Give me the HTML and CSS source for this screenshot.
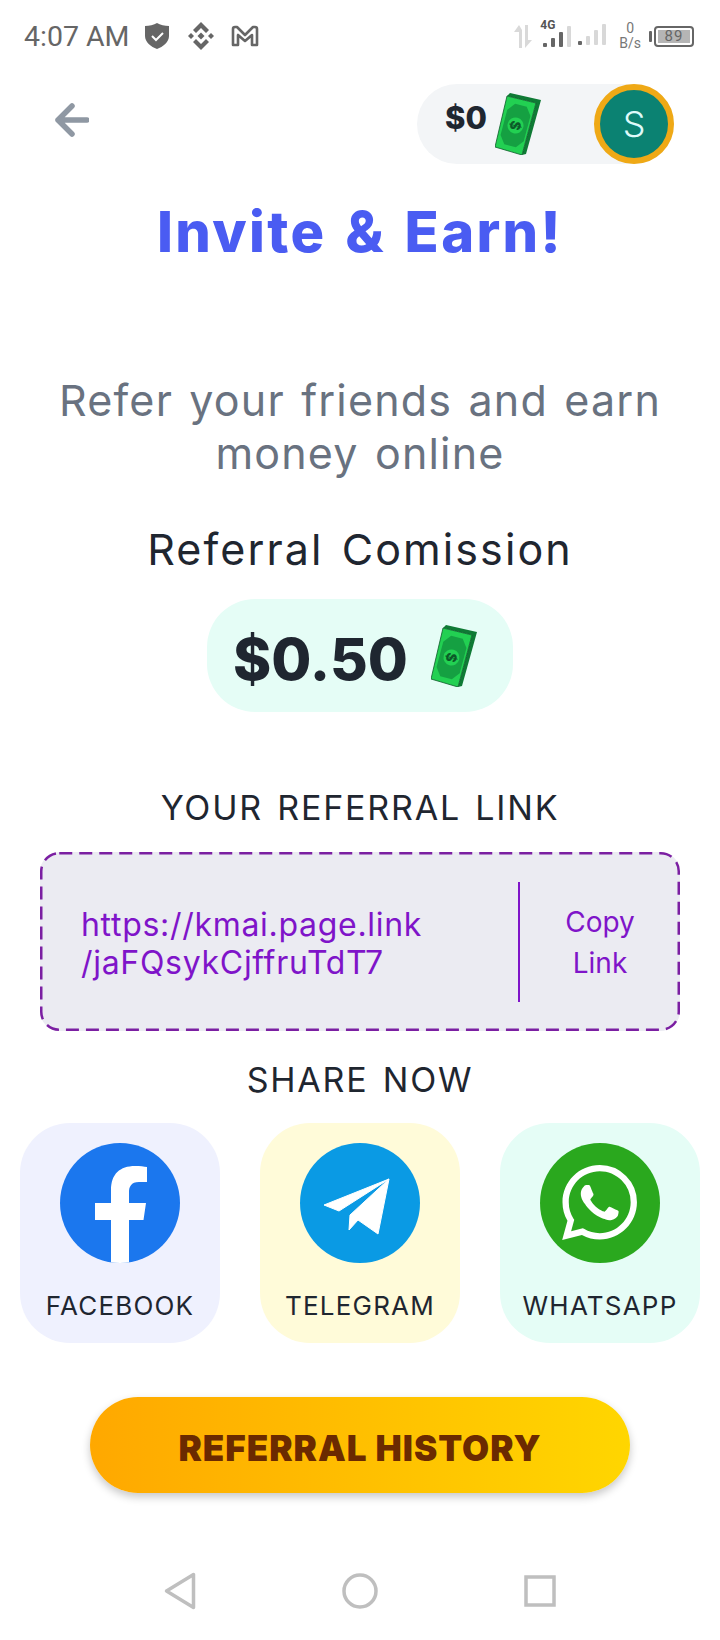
FILE: index.html
```html
<!DOCTYPE html>
<html lang="en">
<head>
    <meta charset="UTF-8">
    <meta name="viewport" content="width=device-width, initial-scale=1.0">
    <title>Invite &amp; Earn</title>
    <link rel="stylesheet" href="styles.css">
</head>
<body>
    <div class="status-bar">
        <div class="status-left">
            <span class="status-time">4:07 AM</span>
            <svg class="ic-shield" width="24" height="26" viewBox="0 0 24 26">
                <path d="M12 0 C15 2 20 3 24 3 V13 C24 19 18 24 12 26 C6 24 0 19 0 13 V3 C4 3 9 2 12 0Z" fill="#666"/>
                <path d="M7 13 L11 17 L18 10" fill="none" stroke="#fff" stroke-width="2"/>
            </svg>
            <svg class="ic-binance" width="28" height="28" viewBox="0 0 28 28" fill="#666">
                <path d="M14 0 L22 8 L19 11 L14 6 L9 11 L6 8Z"/>
                <path d="M14 28 L22 20 L19 17 L14 22 L9 17 L6 20Z"/>
                <path d="M4 11 L7 14 L4 17 L1 14Z"/>
                <path d="M24 11 L27 14 L24 17 L21 14Z"/>
                <path d="M14 10.500 L17.500 14 L14 17.500 L10.500 14Z"/>
            </svg>
            <svg class="ic-mail" width="28" height="22" viewBox="0 0 28 22">
                <path d="M2 20 V4 Q2 2 4 2 H6 L14 10 L22 2 H24 Q26 2 26 4 V20 H21 V10 L14 16 L7 10 V20Z" fill="none" stroke="#666" stroke-width="2.600" stroke-linejoin="round"/>
            </svg>
        </div>
        <div class="status-right">
            <svg class="ic-arrows" width="19" height="23" viewBox="0 0 19 23" fill="#d9d9d9">
                <path d="M6 0 V23 H9 V5Z M1 7 L6 0 V7Z"/>
                <path d="M12 0 V23 L19 15 H15 V0Z"/>
            </svg>
            <div class="signal">
                <span class="signal-label">4G</span>
                <div class="bars">
                    <i class="bar dark h1"></i><i class="bar dark h2"></i><i class="bar dark h3"></i><i class="bar h4"></i>
                </div>
            </div>
            <div class="bars bars-second">
                <i class="bar dark h1"></i><i class="bar h2"></i><i class="bar h3"></i><i class="bar h4"></i>
            </div>
            <div class="speed"><span>0</span><span>B/s</span></div>
            <div class="battery">
                <div class="battery-level">89</div>
            </div>
        </div>
    </div>

    <div class="header">
        <svg class="back" width="34" height="34" viewBox="0 0 34 34">
            <path d="M17 3 L3 17 L17 31 M3 17 H32" fill="none" stroke="#8f98a3" stroke-width="5.500" stroke-linecap="round" stroke-linejoin="round"/>
        </svg>
        <div class="wallet">
            <span class="wallet-amount">$0</span>
            <svg class="cash-small" width="46" height="62" viewBox="0 0 46 62">
                <polygon points="15,0 46,7 31,61 27,62 41,10 12,3" fill="#0f7a35"/>
                <polygon points="12,3 41,10 27,62 0,54" fill="#22d052" stroke="#0c5a2a" stroke-width=".8"/>
                <g transform="translate(20.500 32.500) rotate(15)">
                    <polygon points="-6,-21 6,-21 12,-13 12,13 6,21 -6,21 -12,13 -12,-13" fill="#15a042"/>
                    <circle r="8" fill="#22d052"/>
                    <text class="cash-sign" transform="rotate(90)" y="5">$</text>
                </g>
            </svg>
            <div class="avatar">S</div>
        </div>
    </div>

    <h1 class="title">Invite &amp; Earn!</h1>
    <p class="subtitle">Refer your friends and earn<br>money online</p>
    <h2 class="commission">Referral Comission</h2>

    <div class="amount-pill">
        <span class="amount">$0.50</span>
        <svg width="46" height="62" viewBox="0 0 46 62">
            <polygon points="15,0 46,7 31,61 27,62 41,10 12,3" fill="#0f7a35"/>
            <polygon points="12,3 41,10 27,62 0,54" fill="#22d052" stroke="#0c5a2a" stroke-width=".8"/>
            <g transform="translate(20.500 32.500) rotate(15)">
                <polygon points="-6,-21 6,-21 12,-13 12,13 6,21 -6,21 -12,13 -12,-13" fill="#15a042"/>
                <circle r="8" fill="#22d052"/>
                <text class="cash-sign" transform="rotate(90)" y="5">$</text>
            </g>
        </svg>
    </div>

    <h3 class="section-head head-link">YOUR REFERRAL LINK</h3>
    <div class="link-box">
        <svg class="link-border" width="640" height="179" viewBox="0 0 640 179">
            <rect x="1.250" y="1.250" width="637.500" height="176.500" rx="18" fill="none" stroke="#7b1fa2" stroke-width="2.500" stroke-dasharray="13 7"/>
        </svg>
        <div class="link-url">https://kmai.page.link<br>/jaFQsykCjffruTdT7</div>
        <div class="link-copy">Copy<br>Link</div>
    </div>

    <h3 class="section-head head-share">SHARE NOW</h3>
    <div class="share-row">
        <div class="share-card card-fb">
            <svg width="120" height="120" viewBox="0 0 120 120">
                <clipPath id="fb-clip"><circle cx="60" cy="60" r="60"/></clipPath>
                <circle cx="60" cy="60" r="60" fill="#1b77ee"/>
                <path clip-path="url(#fb-clip)" d="M51 120 V77 H35 V60 H51 V47 C51 31 60 23 75 23 C80 23 84 23.500 87 24 V39 H79 C71 39 69 44 69 49 V60 H86 L83.500 77 H69 V120Z" fill="#fff"/>
            </svg>
            <span class="share-name">FACEBOOK</span>
        </div>
        <div class="share-card card-tg">
            <svg width="120" height="120" viewBox="0 0 120 120">
                <circle cx="60" cy="60" r="60" fill="#0a9ae4"/>
                <path d="M24 62 L89 36 L39 68Z M89 36 L50 72 L49 87 L58 77 L78 91Z" fill="#fff" stroke="#fff" stroke-width="1" stroke-linejoin="round"/>
            </svg>
            <span class="share-name">TELEGRAM</span>
        </div>
        <div class="share-card card-wa">
            <svg width="120" height="120" viewBox="0 0 120 120">
                <circle cx="60" cy="60" r="60" fill="#2aa81e"/>
                <path transform="translate(22 22) scale(3.130)" fill="#fff" d="M17.472 14.382c-.297-.149-1.758-.867-2.03-.967-.273-.099-.471-.148-.67.15-.197.297-.767.966-.94 1.164-.173.199-.347.223-.644.075-.297-.15-1.255-.463-2.39-1.475-.883-.788-1.48-1.761-1.653-2.059-.173-.297-.018-.458.13-.606.134-.133.298-.347.446-.52.149-.174.198-.298.298-.497.099-.198.05-.371-.025-.52-.075-.149-.669-1.612-.916-2.207-.242-.579-.487-.5-.669-.51-.173-.008-.371-.01-.57-.01-.198 0-.52.074-.792.372-.272.297-1.04 1.016-1.04 2.479 0 1.462 1.065 2.875 1.213 3.074.149.198 2.096 3.2 5.077 4.487.709.306 1.262.489 1.694.625.712.227 1.36.195 1.871.118.571-.085 1.758-.719 2.006-1.413.248-.694.248-1.289.173-1.413-.074-.124-.272-.198-.57-.347m-5.421 7.403h-.004a9.87 9.87 0 01-5.031-1.378l-.361-.214-3.741.982.998-3.648-.235-.374a9.86 9.86 0 01-1.51-5.26c.001-5.45 4.436-9.884 9.888-9.884 2.64 0 5.122 1.03 6.988 2.898a9.825 9.825 0 012.893 6.994c-.003 5.45-4.437 9.884-9.885 9.884m8.413-18.297A11.815 11.815 0 0012.05 0C5.495 0 .16 5.335.157 11.892c0 2.096.547 4.142 1.588 5.945L.057 24l6.305-1.654a11.882 11.882 0 005.683 1.448h.005c6.554 0 11.89-5.335 11.893-11.893a11.821 11.821 0 00-3.48-8.413z"/>
            </svg>
            <span class="share-name">WHATSAPP</span>
        </div>
    </div>

    <button type="button" class="history-btn">REFERRAL HISTORY</button>

    <div class="nav-bar">
        <svg width="32" height="38" viewBox="0 0 32 38">
            <path d="M29.500 2.500 V35.500 L2.500 19Z" fill="none" stroke="#bfbfbf" stroke-width="3.500" stroke-linejoin="round"/>
        </svg>
        <svg width="36" height="36" viewBox="0 0 36 36">
            <circle cx="18" cy="18" r="16" fill="none" stroke="#bfbfbf" stroke-width="3.500"/>
        </svg>
        <svg width="32" height="32" viewBox="0 0 32 32">
            <rect x="2" y="2" width="28" height="28" fill="none" stroke="#bfbfbf" stroke-width="3.500"/>
        </svg>
    </div>
</body>
</html>
```

FILE: styles.css
```css
:root {
    --fontFamily: "Inter", Helvetica, Arial, sans-serif;
    --colorInk: #1f2630;
    --colorPurple: #7f14c9;
}

body {
    font-family: var(--fontFamily);
    margin: 0;
    width: 720px;
    height: 1640px;
    overflow: hidden;
    background-color: #fff;
    color: var(--colorInk);
    text-align: center;
}

.cash-sign {
    font-family: "Inter", sans-serif;
    font-size: 14px;
    font-weight: 800;
    fill: #0b5a28;
    text-anchor: middle;
}

/* status bar */
.status-bar {
    height: 72px;
    display: flex;
    justify-content: space-between;
    align-items: center;
    padding: 0 26px 0 24px;
    color: #666;
}

.status-left, .status-right {
    display: flex;
    align-items: center;
}

.status-time {
    font-family: "Roboto", sans-serif;
    font-size: 28.500px;
    margin-right: 15px;
}

.ic-binance {
    margin-left: 18px;
}

.ic-mail {
    margin-left: 16px;
}

.signal {
    position: relative;
    margin: 0 0 4px 11px;
}

.signal-label {
    position: absolute;
    top: -2px;
    left: -3px;
    font-family: "Roboto", sans-serif;
    font-size: 12px;
    font-weight: 700;
    line-height: 12px;
    color: #555;
}

.bars {
    display: flex;
    align-items: flex-end;
    gap: 4px;
    height: 22px;
    margin-top: 4px;
}

.bars-second {
    margin: 0 0 4px 7px;
}

.bar {
    display: block;
    width: 4px;
    background-color: #d8d8d8;
    border-radius: 1px;
}

.bar.dark {
    background-color: #666;
}

.h1 { height: 4px; }
.h2 { height: 9px; }
.h3 { height: 15px; }
.h4 { height: 21px; }

.speed {
    display: flex;
    flex-direction: column;
    font-family: "Roboto", sans-serif;
    font-size: 14px;
    line-height: 15px;
    margin-left: 13px;
    color: #777;
}

.battery {
    position: relative;
    width: 40px;
    height: 21px;
    margin-left: 13px;
    padding: 2px;
    box-sizing: border-box;
    border: 2px solid #666;
    border-radius: 4px;
}

.battery::before {
    content: '';
    position: absolute;
    left: -7px;
    top: 3px;
    width: 3px;
    height: 11px;
    background-color: #666;
    border-radius: 1px;
}

.battery-level {
    width: 100%;
    height: 100%;
    background-color: #b5b5b5;
    font-family: "Roboto", sans-serif;
    font-size: 15px;
    line-height: 13px;
    letter-spacing: 1px;
    color: #666;
}

/* header */
.header {
    display: flex;
    justify-content: space-between;
    align-items: center;
    height: 80px;
    margin-top: 12px;
    padding: 0 46px 0 55px;
}

.back {
    display: block;
    margin-bottom: 8px;
}

.wallet {
    width: 257px;
    height: 80px;
    box-sizing: border-box;
    display: flex;
    align-items: center;
    background-color: #f3f5f7;
    border-radius: 40px;
    padding-left: 28px;
}

.wallet-amount {
    font-size: 31px;
    font-weight: 800;
    margin: 0 8px 14px 0;
}

.cash-small {
    display: block;
}

.avatar {
    width: 68px;
    height: 68px;
    margin-left: auto;
    border: 6px solid #efa916;
    border-radius: 50%;
    background-color: #0b8272;
    color: #dffafa;
    font-size: 36px;
    font-weight: 300;
    line-height: 68px;
}

/* headings */
.title {
    margin: 36px 0 0;
    font-size: 56px;
    font-weight: 800;
    line-height: 64px;
    letter-spacing: 2.400px;
    word-spacing: 4px;
    color: #4a5cf2;
}

.subtitle {
    margin: 110px 0 0;
    font-size: 43px;
    line-height: 53px;
    letter-spacing: 1.200px;
    word-spacing: 3px;
    color: #697280;
}

.commission {
    margin: 42px 0 0;
    font-size: 43px;
    font-weight: 400;
    line-height: 54px;
    letter-spacing: 2.100px;
    word-spacing: 4px;
}

.amount-pill {
    width: 306px;
    height: 113px;
    margin: 23px auto 0;
    box-sizing: border-box;
    padding-left: 26px;
    display: flex;
    align-items: center;
    gap: 23px;
    background-color: #e5fdf6;
    border-radius: 48px;
}

.amount {
    font-size: 58px;
    font-weight: 800;
    padding-top: 6px;
}

.section-head {
    margin: 0;
    font-size: 34px;
    font-weight: 400;
    line-height: 44px;
    letter-spacing: 1.800px;
    word-spacing: 3px;
}

.head-link {
    margin-top: 74px;
}

.head-share {
    margin-top: 27px;
}

/* link box */
.link-box {
    position: relative;
    width: 640px;
    height: 179px;
    margin: 22px auto 0;
    display: flex;
    align-items: center;
    background-color: #ebebf2;
    border-radius: 20px;
    color: var(--colorPurple);
    text-align: left;
}

.link-border {
    position: absolute;
    left: 0;
    top: 0;
}

.link-url {
    width: 480px;
    height: 120px;
    box-sizing: border-box;
    padding: 24px 0 0 41px;
    border-right: 2px solid var(--colorPurple);
    font-size: 32px;
    line-height: 38px;
    letter-spacing: .7px;
}

.link-copy {
    flex: 1;
    padding-top: 2px;
    font-size: 28px;
    line-height: 41px;
    text-align: center;
}

/* share cards */
.share-row {
    display: flex;
    gap: 40px;
    justify-content: center;
    margin-top: 21px;
}

.share-card {
    width: 200px;
    height: 220px;
    box-sizing: border-box;
    padding-top: 20px;
    border-radius: 50px;
    display: flex;
    flex-direction: column;
    align-items: center;
}

.card-fb { background-color: #eff1fe; }
.card-tg { background-color: #fffbd9; }
.card-wa { background-color: #e5fdf6; }

.share-name {
    margin-top: 25px;
    font-size: 26px;
    font-weight: 400;
    line-height: 36px;
    letter-spacing: 1.200px;
}

/* button */
.history-btn {
    display: block;
    width: 540px;
    height: 96px;
    margin: 54px auto 0;
    padding-top: 6px;
    border: none;
    border-radius: 48px;
    background: linear-gradient(90deg, #ffa800, #ffd600);
    box-shadow: 0 4px 8px rgba(0, 0, 0, 0.22);
    color: #6b2a00;
    font-family: var(--fontFamily);
    font-size: 35px;
    font-weight: 900;
    letter-spacing: 1px;
}

/* android nav */
.nav-bar {
    display: flex;
    justify-content: space-between;
    align-items: center;
    width: 392px;
    height: 40px;
    margin: 78px 0 0 164px;
}
```
